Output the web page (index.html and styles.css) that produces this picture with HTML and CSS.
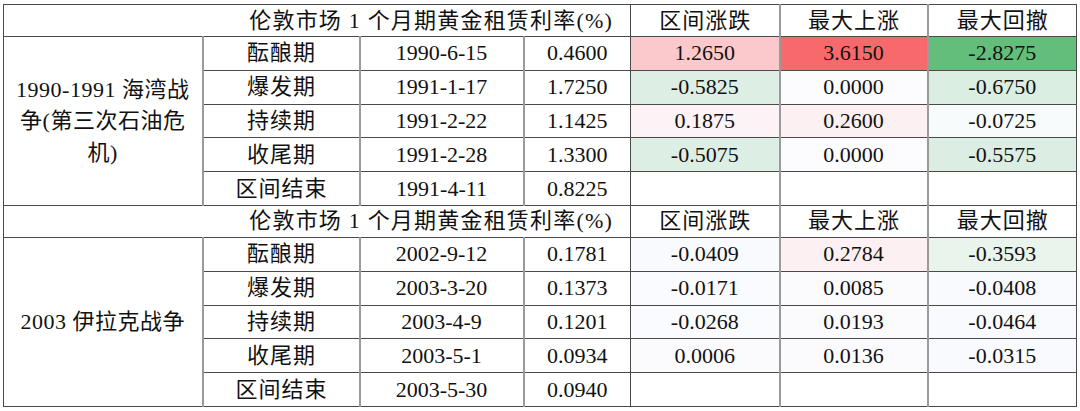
FILE: index.html
```html
<!DOCTYPE html>
<html lang="zh">
<head>
<meta charset="utf-8">
<title>伦敦市场黄金租赁利率</title>
<link rel="stylesheet" href="styles.css">
</head>
<body>
<table class="grid">
  <colgroup>
    <col class="c1"><col class="c2"><col class="c3"><col class="c4"><col class="c5"><col class="c6"><col class="c7">
  </colgroup>
  <tbody>
    <tr class="head">
      <td colspan="4" class="title">伦敦市场 1 个月期黄金租赁利率(%)</td>
      <td class="g cn">区间涨跌</td><td class="g cn">最大上涨</td><td class="cn">最大回撤</td>
    </tr>
    <tr>
      <td rowspan="5" class="event">1990-1991 海湾战<br>争(第三次石油危<br>机)</td>
      <td class="g cn">酝酿期</td><td class="g">1990-6-15</td><td>0.4600</td>
      <td class="g" style="background:#fbc9cb">1.2650</td>
      <td class="g" style="background:#f8696b">3.6150</td>
      <td style="background:#63be7b">-2.8275</td>
    </tr>
    <tr>
      <td class="g cn">爆发期</td><td class="g">1991-1-17</td><td>1.7250</td>
      <td class="g" style="background:#ddefe4">-0.5825</td>
      <td class="g" style="background:#fcfcff">0.0000</td>
      <td style="background:#dbeee2">-0.6750</td>
    </tr>
    <tr>
      <td class="g cn">持续期</td><td class="g">1991-2-22</td><td>1.1425</td>
      <td class="g" style="background:#fdf2f5">0.1875</td>
      <td class="g" style="background:#fcf0f2">0.2600</td>
      <td style="background:#f8fbfb">-0.0725</td>
    </tr>
    <tr>
      <td class="g cn">收尾期</td><td class="g">1991-2-28</td><td>1.3300</td>
      <td class="g" style="background:#ddefe4">-0.5075</td>
      <td class="g" style="background:#fcfcff">0.0000</td>
      <td style="background:#dceee3">-0.5575</td>
    </tr>
    <tr>
      <td class="g cn">区间结束</td><td class="g">1991-4-11</td><td>0.8225</td>
      <td class="g"></td><td class="g"></td><td></td>
    </tr>
    <tr class="head">
      <td colspan="4" class="title">伦敦市场 1 个月期黄金租赁利率(%)</td>
      <td class="g cn">区间涨跌</td><td class="g cn">最大上涨</td><td class="cn">最大回撤</td>
    </tr>
    <tr>
      <td rowspan="5" class="event">2003 伊拉克战争</td>
      <td class="g cn">酝酿期</td><td class="g">2002-9-12</td><td>0.1781</td>
      <td class="g" style="background:#f9fafe">-0.0409</td>
      <td class="g" style="background:#fcf0f2">0.2784</td>
      <td style="background:#e9f4ed">-0.3593</td>
    </tr>
    <tr>
      <td class="g cn">爆发期</td><td class="g">2003-3-20</td><td>0.1373</td>
      <td class="g" style="background:#fafbfe">-0.0171</td>
      <td class="g" style="background:#fbfbfe">0.0085</td>
      <td style="background:#f9fafd">-0.0408</td>
    </tr>
    <tr>
      <td class="g cn">持续期</td><td class="g">2003-4-9</td><td>0.1201</td>
      <td class="g" style="background:#fafbfe">-0.0268</td>
      <td class="g" style="background:#fbfbfe">0.0193</td>
      <td style="background:#f9fafd">-0.0464</td>
    </tr>
    <tr>
      <td class="g cn">收尾期</td><td class="g">2003-5-1</td><td>0.0934</td>
      <td class="g" style="background:#fbfbfe">0.0006</td>
      <td class="g" style="background:#fbfbfe">0.0136</td>
      <td style="background:#f9fafd">-0.0315</td>
    </tr>
    <tr>
      <td class="g cn">区间结束</td><td class="g">2003-5-30</td><td>0.0940</td>
      <td class="g"></td><td class="g"></td><td></td>
    </tr>
  </tbody>
</table>
</body>
</html>
```

FILE: styles.css
```css
html, body {
  margin: 0;
  padding: 0;
  background: #ffffff;
}

body {
  font-family: "Liberation Serif", "Noto Sans CJK SC", serif;
  font-size: 22px;
  color: #111111;
}

.grid {
  border-collapse: collapse;
  table-layout: fixed;
  width: 1073px;
  margin: 4px 0 0 3px;
}

.c1 { width: 199px; }
.c2 { width: 157px; }
.c3 { width: 164px; }
.c4 { width: 107px; }
.c5 { width: 149px; }
.c6 { width: 148px; }
.c7 { width: 149px; }

.grid td {
  border: 1px solid #4a4a4a;
  padding: 0;
  height: 32.8px;
  text-align: center;
  vertical-align: middle;
  white-space: nowrap;
  line-height: 26px;
  background: #ffffff;
}

.grid tr.head td {
  height: 31px;
}

.grid td.g {
  border-right: 2px solid #9a9a9a;
}

.grid td.cn {
  letter-spacing: 1px;
  text-indent: 1px;
}

.grid td.title {
  text-align: right;
  padding-right: 17px;
  letter-spacing: 1.2px;
}

.grid td.event {
  line-height: 31.5px;
  letter-spacing: 0.5px;
  border-right: 2px solid #9a9a9a;
}
```
